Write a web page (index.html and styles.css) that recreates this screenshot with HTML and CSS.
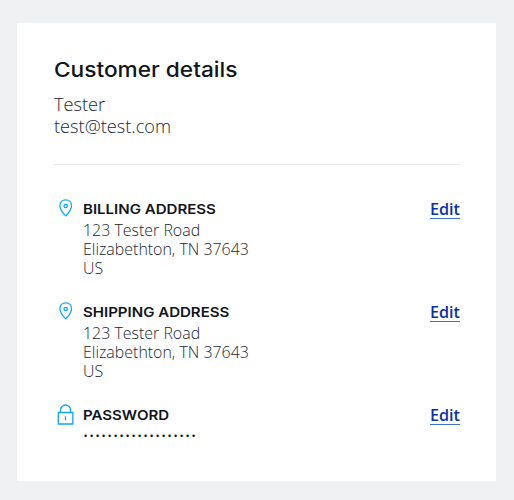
FILE: index.html
```html
<!DOCTYPE html>
<html lang="en">
<head>
<meta charset="utf-8">
<title>Customer details</title>
<link rel="stylesheet" href="styles.css">
</head>
<body>
<main class="card">
  <h1 class="title"><span class="title-text">Customer details</span></h1>
  <p class="contact">Tester<br>test@test.com</p>
  <section class="row">
    <svg class="icon" viewBox="0 0 20 22"><path d="M9.700 2.800C6.200 2.800 3.900 5.400 3.900 8.700c0 3.600 2.800 7.100 5.800 10.200 3-3.100 5.800-6.600 5.800-10.200 0-3.300-2.300-5.900-5.800-5.900z"/><circle cx="9.700" cy="9" r="1.700"/></svg>
    <div class="info">
      <h2 class="label"><span>BILLING ADDRESS</span></h2>
      <p class="address">123 Tester Road<br>Elizabethton, TN 37643<br>US</p>
    </div>
    <a class="edit">Edit</a>
  </section>
  <section class="row">
    <svg class="icon" viewBox="0 0 20 22"><path d="M9.700 2.800C6.200 2.800 3.900 5.400 3.900 8.700c0 3.600 2.800 7.100 5.800 10.200 3-3.100 5.800-6.600 5.800-10.200 0-3.300-2.300-5.900-5.800-5.900z"/><circle cx="9.700" cy="9" r="1.700"/></svg>
    <div class="info">
      <h2 class="label"><span>SHIPPING ADDRESS</span></h2>
      <p class="address">123 Tester Road<br>Elizabethton, TN 37643<br>US</p>
    </div>
    <a class="edit">Edit</a>
  </section>
  <section class="row">
    <svg class="icon" viewBox="0 0 20 22"><path d="M2.300 9.500h14.500v11.500h-14.500zM4.500 9.500V7a5 5 0 0 1 10 0v2.500M9.500 13.200v4"/></svg>
    <div class="info">
      <h2 class="label"><span>PASSWORD</span></h2>
      <p class="dots">•••••••••••••••••••</p>
    </div>
    <a class="edit">Edit</a>
  </section>
</main>
</body>
</html>
```
FILE: styles.css
```css
* { box-sizing: border-box; }
body {
  margin: 0;
  padding: 23px 18px 19px 17px;
  height: 500px;
  background: #eff1f3;
  font-family: "Open Sans", sans-serif;
  color: #20272f;
}
.card {
  width: 479px;
  height: 458px;
  padding: 32px 36px 0 37px;
  background: #fff;
}
h1, h2, p { margin: 0; }
.title {
  height: 30px;
  font: 550 20.5px/29px Inter, sans-serif;
  color: #11161c;
}
.title-text {
  display: inline-block;
  transform: scaleX(1.105);
  transform-origin: left;
}
.contact {
  margin-top: 8px;
  padding-bottom: 27px;
  border-bottom: 1px solid #e7eaeb;
  font-size: 18.2px;
  font-weight: 300;
  line-height: 22px;
}
.row {
  display: flex;
  height: 103px;
}
.contact + .row {
  margin-top: 32px;
}
.icon {
  width: 20px;
  height: 22px;
  margin-left: 2px;
  fill: none;
  stroke: #10a5fa;
  stroke-width: 1.3;
}
.info {
  flex: 1;
  margin-left: 7px;
}
.label {
  height: 24px;
  font: 600 13px/24px Inter, sans-serif;
  color: #11161c;
}
.label span {
  display: inline-block;
  transform: scaleX(1.157);
  transform-origin: left;
}
.address {
  font-size: 15.95px;
  font-weight: 300;
  line-height: 19px;
}
.dots {
  padding-left: 1px;
  font: 9px/19px "Liberation Sans", sans-serif;
  color: #11161c;
  letter-spacing: 2.85px;
}
.edit {
  height: 22px;
  border-bottom: 1px solid #3972cf;
  font-size: 16.2px;
  font-weight: 550;
  line-height: 24px;
  color: #0a32a5;
}
```
